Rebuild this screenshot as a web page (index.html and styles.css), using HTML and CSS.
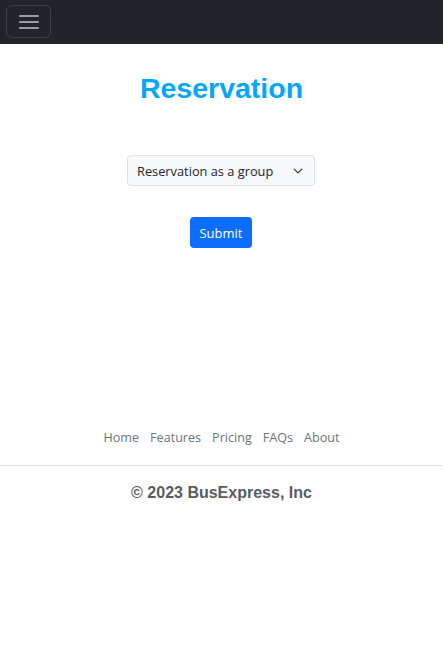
FILE: index.html
```html
<!DOCTYPE html>
<html>
<head>
<meta charset="utf-8">
<link rel="stylesheet" href="styles.css">
</head>
<body>
<nav class="navbar">
  <button class="toggler" aria-label="menu">
    <span class="bar"></span><span class="bar"></span><span class="bar"></span>
  </button>
</nav>
<main class="content">
  <h1 class="title">Reservation</h1>
  <div class="select">
    <span class="select-text">Reservation as a group</span>
    <svg class="chev" width="12" height="12" viewBox="0 0 16 16"><path d="M2 5l6 6 6-6" fill="none" stroke="#343a40" stroke-width="2" stroke-linecap="round" stroke-linejoin="round"/></svg>
  </div>
  <button class="btn">Submit</button>
</main>
<footer class="footer">
  <ul class="links">
    <li>Home</li><li>Features</li><li>Pricing</li><li>FAQs</li><li>About</li>
  </ul>
  <p class="copy">© 2023 BusExpress, Inc</p>
</footer>
</body>
</html>
```
FILE: styles.css
```css
html, body { margin: 0; padding: 0; background: #fff; }
body { font-family: "Open Sans", "Noto Sans", sans-serif; }
.navbar {
  background: #212529;
  height: 44px;
  box-sizing: border-box;
  padding: 5px 6px;
  display: flex;
  align-items: flex-start;
}
.toggler {
  width: 45px;
  height: 33px;
  border: 1px solid rgba(255,255,255,0.12);
  border-radius: 6px;
  background: transparent;
  display: flex;
  flex-direction: column;
  justify-content: center;
  align-items: center;
  gap: 4px;
  padding: 0;
}
.bar { display: block; width: 20px; height: 2px; background: #9a9da0; border-radius: 1px; }
.content {
  display: flex;
  flex-direction: column;
  align-items: center;
}
.title {
  font-family: "Liberation Sans", Arial, sans-serif;
  font-weight: bold;
  font-size: 28.5px;
  color: #07a6fd;
  margin: 27px 0 1px;
  line-height: 34px;
}
.select {
  margin-top: 49px;
  margin-right: 1px;
  width: 188px;
  height: 31px;
  box-sizing: border-box;
  border: 1px solid #dee2e6;
  border-radius: 4px;
  background: #f8f9fa;
  display: flex;
  align-items: center;
  justify-content: space-between;
  padding: 0 11px 0 9px;
  font-size: 12.8px;
  color: #212529;
}
.chev { width: 10px; height: 10px; }
.btn {
  margin-top: 31px;
  margin-right: 1px;
  width: 62px;
  height: 31px;
  border: none;
  border-radius: 4px;
  background: #0d6efd;
  color: #fff;
  font-family: "Open Sans", "Noto Sans", sans-serif;
  font-size: 13px;
  padding: 0;
}
.footer { margin-top: 181px; }
.links {
  list-style: none;
  margin: 0;
  padding: 0 0 19px;
  display: flex;
  justify-content: center;
  gap: 11px;
  font-size: 12.6px;
  color: #6c757d;
  border-bottom: 1px solid #dee2e6;
}
.copy {
  margin: 18px 0 0;
  text-align: center;
  font-family: "Liberation Sans", Arial, sans-serif;
  font-weight: bold;
  font-size: 16px;
  color: #595c5f;
}
```
